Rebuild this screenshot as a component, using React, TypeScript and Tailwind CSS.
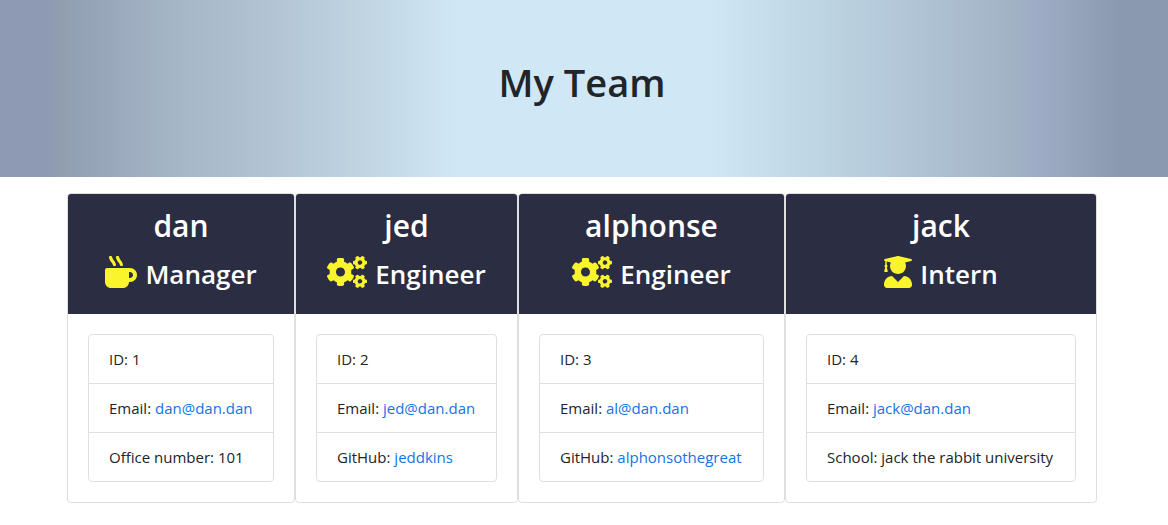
import type { IconType } from "react-icons";
import { FaCogs, FaMugHot, FaUserGraduate } from "react-icons/fa";

type Member = {
  id: number;
  name: string;
  role: string;
  icon: IconType;
  iconClass: string;
  email: string;
  label: string;
  value: string;
  href?: string;
};

const team: Member[] = [
  { id: 1, name: "dan", role: "Manager", icon: FaMugHot, iconClass: "w-8", email: "dan@dan.dan", label: "Office number", value: "101" },
  { id: 2, name: "jed", role: "Engineer", icon: FaCogs, iconClass: "w-10", email: "jed@dan.dan", label: "GitHub", value: "jeddkins", href: "https://github.com/jeddkins" },
  { id: 3, name: "alphonse", role: "Engineer", icon: FaCogs, iconClass: "w-10", email: "al@dan.dan", label: "GitHub", value: "alphonsothegreat", href: "https://github.com/alphonsothegreat" },
  { id: 4, name: "jack", role: "Intern", icon: FaUserGraduate, iconClass: "w-7", email: "jack@dan.dan", label: "School", value: "jack the rabbit university" },
];

function Card({ member }: { member: Member }) {
  const Icon = member.icon;
  return (
    <article className="overflow-hidden rounded border border-[#dfdfdf] bg-white">
      <header className="bg-[#2b2d42] px-5 pt-3 pb-5 text-center font-semibold text-white">
        <h2 className="mb-2 text-[30px] leading-10">{member.name}</h2>
        <h3 className="flex items-center justify-center gap-2 text-[26px] leading-10">
          <Icon className={`${member.iconClass} h-9 shrink-0 pb-1 text-[#f9f42b]`} aria-hidden="true" />
          {member.role}
        </h3>
      </header>
      <div className="p-5">
        <ul className="divide-y divide-[#dfdfdf] rounded border border-[#dfdfdf] text-[15px] leading-6 whitespace-nowrap">
          <li className="px-5 py-3">ID: {member.id}</li>
          <li className="px-5 py-3">
            Email: <a className="text-[#1473e6] hover:underline" href={`mailto:${member.email}`}>{member.email}</a>
          </li>
          <li className="px-5 py-3">
            {member.label}:{" "}
            {member.href ? <a className="text-[#1473e6] hover:underline" href={member.href}>{member.value}</a> : member.value}
          </li>
        </ul>
      </div>
    </article>
  );
}

export default function App() {
  return (
    <div className="bg-white font-['Open_Sans',sans-serif] text-[#212529]">
      <header className="mb-4 bg-[linear-gradient(90deg,#8e99b3_0%,#8e99b3_4%,#909eb0_5%,#9ba9bd_10%,#a3b4c4_14%,#b2c4d4_23%,#c2d6e4_32%,#d0e7f5_39%,#d0e7f5_61%,#c1d9e6_68%,#b3c7d8_77%,#a3b4c6_86%,#9dabc4_89%,#8b99b0_96%,#8b99b0_100%)] pt-[50px] pr-1 pb-[62px] text-center">
        <h1 className="text-[38px] leading-[65px] font-semibold">My Team</h1>
      </header>
      <main className="pr-1">
        <div className="mx-auto grid max-w-[1030px] grid-cols-[228fr_223fr_267fr_312fr]">
          {team.map((member) => (
            <Card key={member.id} member={member} />
          ))}
        </div>
      </main>
    </div>
  );
}
